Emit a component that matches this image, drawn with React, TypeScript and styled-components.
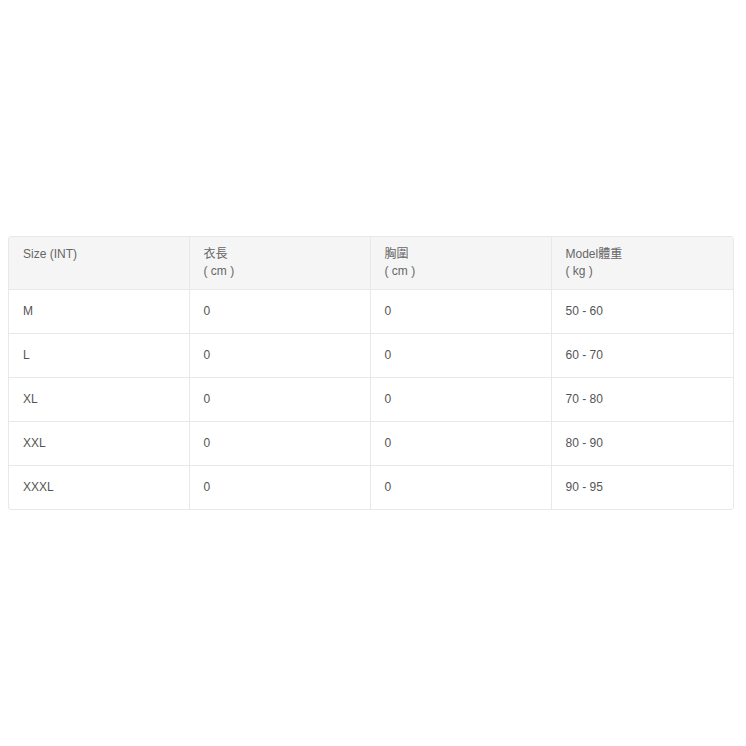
import React from "react";
import styled, { createGlobalStyle } from "styled-components";

const Global = createGlobalStyle`
  html, body { margin: 0; padding: 0; background: #fff; }
  body { font-family: "Liberation Sans", Arial, "Noto Sans CJK TC", sans-serif; }
`;

const Page = styled.div`
  min-height: 746px;
  box-sizing: border-box;
  padding: 0 12px 0 8px;
  display: flex;
  flex-direction: column;
  justify-content: center;
`;

const Frame = styled.div`
  border: 1px solid #e8e8e8;
  border-radius: 3px;
  overflow: hidden;
`;

const Table = styled.table`
  width: 100%;
  border-collapse: collapse;
  table-layout: fixed;
  font-size: 12px;
  line-height: 17px;
`;

const Col = styled.col<{ $w: number }>`
  width: ${(p) => p.$w}px;
`;

const Th = styled.th`
  background: #f5f5f5;
  color: #666;
  font-weight: 400;
  text-align: left;
  vertical-align: top;
  padding: 9px 14px 9px 14px;
  border-left: 1px solid #e8e8e8;
  &:first-child { border-left: none; }
`;

const Td = styled.td`
  color: #555;
  text-align: left;
  padding: 13px 14px;
  border-left: 1px solid #e8e8e8;
  border-top: 1px solid #e8e8e8;
  &:first-child { border-left: none; }
`;

const colWidths = [180, 181, 181, 183];

const headers: [string, string][] = [
  ["Size (INT)", ""],
  ["衣長", "( cm )"],
  ["胸圍", "( cm )"],
  ["Model體重", "( kg )"],
];

const rows = [
  ["M", "0", "0", "50 - 60"],
  ["L", "0", "0", "60 - 70"],
  ["XL", "0", "0", "70 - 80"],
  ["XXL", "0", "0", "80 - 90"],
  ["XXXL", "0", "0", "90 - 95"],
];

export default function App() {
  return (
    <>
      <Global />
      <Page>
        <Frame>
          <Table>
            <colgroup>
              {colWidths.map((w, i) => (
                <Col key={i} $w={w} />
              ))}
            </colgroup>
            <thead>
              <tr>
                {headers.map(([a, b], i) => (
                  <Th key={i}>
                    {a}
                    <br />
                    {b || "\u00a0"}
                  </Th>
                ))}
              </tr>
            </thead>
            <tbody>
              {rows.map((r, i) => (
                <tr key={i}>
                  {r.map((c, j) => (
                    <Td key={j}>{c}</Td>
                  ))}
                </tr>
              ))}
            </tbody>
          </Table>
        </Frame>
      </Page>
    </>
  );
}
